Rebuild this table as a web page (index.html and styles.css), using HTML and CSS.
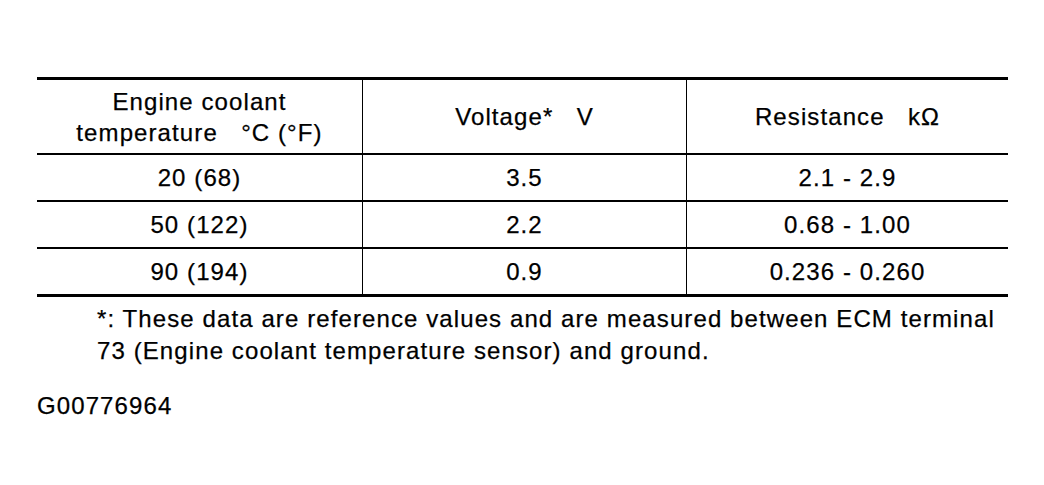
FILE: index.html
```html
<!DOCTYPE html>
<html>
<head>
    <title>Engine coolant temperature sensor</title>
    <link rel="stylesheet" href="styles.css">
</head>
<body>
    <div class="page">
        <table class="spec-table">
            <thead>
                <tr>
                    <th class="col-temp">Engine coolant<br>temperature &nbsp;&nbsp;°C (°F)</th>
                    <th class="col-volt">Voltage* &nbsp;&nbsp;V</th>
                    <th class="col-res">Resistance &nbsp;&nbsp;kΩ</th>
                </tr>
            </thead>
            <tbody>
                <tr>
                    <td>20 (68)</td>
                    <td>3.5</td>
                    <td>2.1 - 2.9</td>
                </tr>
                <tr>
                    <td>50 (122)</td>
                    <td>2.2</td>
                    <td>0.68 - 1.00</td>
                </tr>
                <tr>
                    <td>90 (194)</td>
                    <td>0.9</td>
                    <td>0.236 - 0.260</td>
                </tr>
            </tbody>
        </table>

        <!-- footnote under the table -->
        <p class="note">*: These data are reference values and are measured between ECM terminal<br>73 (Engine coolant temperature sensor) and ground.</p>

        <p class="fig-id">G00776964</p>
    </div>
</body>
</html>
```

FILE: styles.css
```css
body {
    margin: 0;
    padding: 0;
    background-color: white;
    color: black;
    font-family: "Liberation Sans", Arial, sans-serif;
    font-size: 24px;
    letter-spacing: 1.1px;
    -webkit-text-stroke: 0.25px black;
}
.page {
    padding: 77px 38px 0 37px;
}
.spec-table {
    width: 969px;
    table-layout: fixed;
    border-collapse: collapse;
    border-top: 3px solid black;
    border-bottom: 3px solid black;
}
.col-temp {
    width: 325px;
}
.col-volt {
    width: 323px;
}
.col-res {
    width: 321px;
}
.spec-table th,
.spec-table td {
    text-align: center;
    vertical-align: middle;
    font-weight: normal;
    padding: 0;
    border-left: 1px solid black;
    border-bottom: 2px solid black;
}
.spec-table th:first-child,
.spec-table td:first-child {
    border-left: none;
}
.spec-table th {
    height: 73px;
    line-height: 31px;
}
.spec-table td {
    height: 45px;
    line-height: 30px;
}
.spec-table tbody tr:last-child td {
    border-bottom: none;
}
.note {
    margin: 6px 0 0 60px;
    line-height: 32px;
}
.fig-id {
    margin: 23px 0 0 0;
    line-height: 32px;
}
```
